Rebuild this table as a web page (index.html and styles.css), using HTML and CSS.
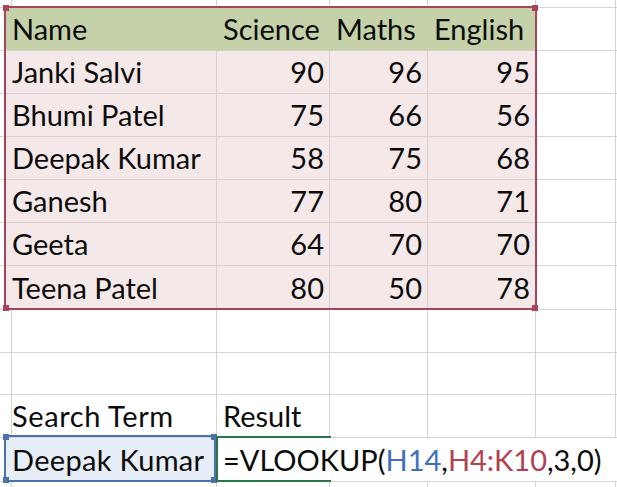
FILE: index.html
```html
<!DOCTYPE html>
<html>
<head>
<meta charset="utf-8">
<link rel="stylesheet" href="styles.css">
</head>
<body>
<div class="sheet">
  <div class="c"></div><div class="c"></div><div class="c"></div><div class="c"></div><div class="c"></div><div class="c"></div><div class="c end"></div>

  <div class="c"></div><div class="c h">Name</div><div class="c h">Science</div><div class="c h">Maths</div><div class="c h hl">English</div><div class="c"></div><div class="c end"></div>

  <div class="c"></div><div class="c p">Janki Salvi</div><div class="c p n">90</div><div class="c p n">96</div><div class="c p n">95</div><div class="c"></div><div class="c end"></div>
  <div class="c"></div><div class="c p">Bhumi Patel</div><div class="c p n">75</div><div class="c p n">66</div><div class="c p n">56</div><div class="c"></div><div class="c end"></div>
  <div class="c"></div><div class="c p">Deepak Kumar</div><div class="c p n">58</div><div class="c p n">75</div><div class="c p n">68</div><div class="c"></div><div class="c end"></div>
  <div class="c"></div><div class="c p">Ganesh</div><div class="c p n">77</div><div class="c p n">80</div><div class="c p n">71</div><div class="c"></div><div class="c end"></div>
  <div class="c"></div><div class="c p">Geeta</div><div class="c p n">64</div><div class="c p n">70</div><div class="c p n">70</div><div class="c"></div><div class="c end"></div>
  <div class="c"></div><div class="c p">Teena Patel</div><div class="c p n">80</div><div class="c p n">50</div><div class="c p n">78</div><div class="c"></div><div class="c end"></div>

  <div class="c"></div><div class="c"></div><div class="c"></div><div class="c"></div><div class="c"></div><div class="c"></div><div class="c end"></div>
  <div class="c"></div><div class="c"></div><div class="c"></div><div class="c"></div><div class="c"></div><div class="c"></div><div class="c end"></div>

  <div class="c"></div><div class="c wide">Search Term</div><div class="c">Result</div><div class="c"></div><div class="c"></div><div class="c"></div><div class="c end"></div>

  <div class="c"></div><div class="c sel">Deepak Kumar</div><div class="c edit">=VLOOKUP(<span class="ref-b">H14</span>,<span class="ref-r">H4:K10</span>,3,0)<span class="caret"></span></div><div class="c nor"></div><div class="c nor"></div><div class="c nor"></div><div class="c end"></div>

  <div class="c"></div><div class="c"></div><div class="c"></div><div class="c"></div><div class="c"></div><div class="c"></div><div class="c end"></div>

  <div class="range"><i class="hd tl"></i><i class="hd tr"></i><i class="hd bl"></i><i class="hd br"></i></div>
  <div class="bluebox"><i class="hd tl"></i><i class="hd tr"></i><i class="hd bl"></i><i class="hd br"></i></div>
  <div class="greenbox"></div>
</div>
</body>
</html>
```
FILE: styles.css
```css
html, body {
  margin: 0;
  padding: 0;
  background: #ffffff;
  overflow: hidden;
}
.sheet {
  position: relative;
  display: grid;
  grid-template-columns: 6px 211px 113px 98px 108px 80px 1fr;
  grid-template-rows: 8px 43px 43px 43px 43px 43px 43px 44px 43px 42px 43px 44px 5px;
  width: 617px;
  height: 487px;
  overflow: hidden;
  font-family: Lato, "Open Sans", sans-serif;
  font-size: 29px;
  color: #0c0c0c;
}
.c {
  box-sizing: border-box;
  border-right: 1px solid #d4d4d4;
  border-bottom: 1px solid #d4d4d4;
  line-height: 30px;
  padding: 0 5px 6px 6px;
  display: flex;
  align-items: flex-end;
  white-space: nowrap;
  min-width: 0;
}
.c.end {
  border-right: none;
}
.wide {
  letter-spacing: 0.6px;
}
.h {
  background: #c5d2a9;
  border-right-color: #c5d2a9;
  border-bottom-color: #d9cfcf;
}
.h.hl {
  border-right-color: #d4d4d4;
}
.p {
  background: #f4e8e8;
  border-color: #dccfd0;
}
.n {
  justify-content: flex-end;
}
.sel {
  background: #e8eef7;
  letter-spacing: 0.3px;
}
.edit {
  overflow: visible;
  border-right: none;
}
.nor {
  border-right: none;
}
.ref-b {
  color: #3f6fbf;
}
.ref-r {
  color: #b3404f;
}
.caret {
  display: inline-block;
  width: 1px;
  height: 40px;
  background: #000000;
  margin-left: 1px;
  vertical-align: -9px;
}
.range {
  position: absolute;
  left: 4px;
  top: 6px;
  width: 533px;
  height: 304px;
  box-sizing: border-box;
  border: 2px solid #a8445a;
}
.bluebox {
  position: absolute;
  left: 4px;
  top: 435px;
  width: 212px;
  height: 47px;
  box-sizing: border-box;
  border: 2px solid #4a72ad;
}
.greenbox {
  position: absolute;
  left: 216px;
  top: 436px;
  width: 115px;
  height: 46px;
  box-sizing: border-box;
  border: 2px solid #2a7447;
  border-right: none;
}
.hd {
  position: absolute;
  width: 6px;
  height: 6px;
}
.range .hd {
  background: #a8445a;
}
.bluebox .hd {
  background: #4a72ad;
}
.tl { left: -3px; top: -3px; }
.tr { right: -3px; top: -3px; }
.bl { left: -3px; bottom: -3px; }
.br { right: -3px; bottom: -3px; }
```
